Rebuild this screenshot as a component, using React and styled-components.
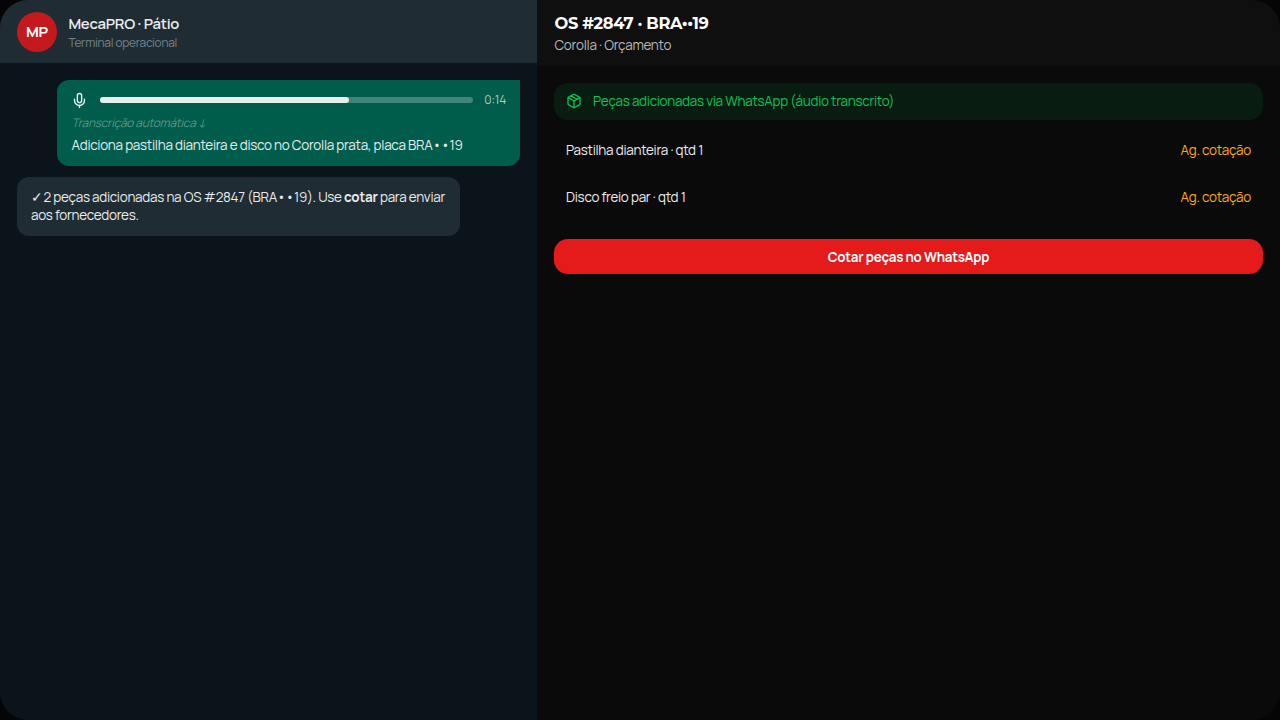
import React from "react";
import styled, { createGlobalStyle } from "styled-components";
import { Mic, Package } from "lucide-react";

const GlobalStyle = createGlobalStyle`
  * { box-sizing: border-box; }
  body {
    margin: 0;
    background: #050505;
    font-family: Manrope, sans-serif;
  }
`;

const Frame = styled.main`
  display: flex;
  width: 1280px;
  height: 720px;
  border-radius: 28px;
  overflow: hidden;
  background: #0a0a0a;
`;

const Chat = styled.section`
  flex: 0 0 537px;
  background: #0b141a;
`;

const ChatHeader = styled.header`
  display: flex;
  align-items: center;
  gap: 11.5px;
  height: 63px;
  padding: 0 17px;
  background: #202c33;
`;

const Avatar = styled.div`
  display: grid;
  place-items: center;
  width: 40px;
  height: 40px;
  border-radius: 50%;
  background: #c41a1e;
`;

const Label = styled.span`
  display: block;
  white-space: nowrap;
  font-size: ${(p) => p.$size || 13.44}px;
  line-height: ${(p) => p.$line || 18}px;
  font-weight: ${(p) => p.$weight || 400};
  letter-spacing: -0.02em;
  color: ${(p) => p.$color || "#e9edef"};
`;

const Contact = styled.div`
  padding-top: 2px;
`;

const Messages = styled.div`
  display: flex;
  flex-direction: column;
  gap: 12px;
  padding: 17px;
`;

const VoiceBubble = styled.article`
  align-self: flex-end;
  width: 463px;
  height: 85.5px;
  padding: 11px 14px 0 14.5px;
  border-radius: 12px 0 12px 12px;
  background: #005c4b;
`;

const Player = styled.div`
  display: flex;
  align-items: center;
  height: 18px;
  color: #e2f1ee;

  svg {
    margin-left: -0.5px;
  }
`;

const Track = styled.div`
  flex: 1;
  height: 6px;
  margin: 0 11.5px 0 12px;
  border-radius: 3px;
  background: #408577;
`;

const Progress = styled.div`
  width: 66.7%;
  height: 6px;
  border-radius: 3px;
  background: #e6f0ee;
`;

const Transcript = styled(Label)`
  margin-top: 5px;
  font-style: italic;
`;

const PlateMask = styled.span`
  word-spacing: -2.4px;
`;

const Check = styled.span`
  display: inline-block;
  width: 9px;
  margin-right: 3.5px;
  font-size: 14px;
  line-height: 1;
`;

const ReplyBubble = styled.article`
  width: 443px;
  height: 59px;
  margin-top: -0.5px;
  padding: 10.5px 14px;
  border-radius: 12px;
  background: #202c33;
`;

const Order = styled.section`
  flex: 1;
  background: #0a0a0a;
`;

const OrderHeader = styled.header`
  height: 66px;
  padding: 13px 17px 0 17.5px;
  background: #0f0f0f;
`;

const OrderTitle = styled(Label)`
  font-family: Montserrat, sans-serif;
`;

const OrderBody = styled.div`
  padding: 17px 17px 0;
`;

const Notice = styled.div`
  display: flex;
  align-items: center;
  gap: 11.5px;
  height: 37px;
  padding: 0 12px 1px 11.5px;
  border-radius: 14px;
  background: #091c12;
  color: #00c853;
`;

const Part = styled.div`
  display: flex;
  align-items: center;
  justify-content: space-between;
  height: 35px;
  margin-top: 12px;
  padding: 0 12px;
`;

const QuoteButton = styled.button`
  display: flex;
  align-items: center;
  justify-content: center;
  width: 100%;
  height: 35.5px;
  margin-top: 24.5px;
  padding: 1px 0 0;
  border: 0;
  border-radius: 14px;
  background: #e51a1a;
  font-family: inherit;
`;

const parts = ["Pastilha dianteira · qtd 1", "Disco freio par · qtd 1"];

export default function App() {
  return (
    <>
      <GlobalStyle />
      <Frame>
        <Chat>
          <ChatHeader>
            <Avatar><Label $size={15} $weight={700} $color="#fff">MP</Label></Avatar>
            <Contact>
              <Label $size={14.9} $line={20.5} $weight={600}>MecaPRO · Pátio</Label>
              <Label $size={11.9} $line={19} $color="#75838c">Terminal operacional</Label>
            </Contact>
          </ChatHeader>
          <Messages>
            <VoiceBubble>
              <Player>
                <Mic size={17} strokeWidth={2} />
                <Track><Progress /></Track>
                <Label $size={12} $color="#a9cdc4">0:14</Label>
              </Player>
              <Transcript $size={11.9} $color="#5d9689">Transcrição automática ↓</Transcript>
              <Label $line={26}>Adiciona pastilha dianteira e disco no Corolla prata, placa BRA<PlateMask>• •</PlateMask>19</Label>
            </VoiceBubble>
            <ReplyBubble>
              <Label $line={18.5}><Check>✓</Check>2 peças adicionadas na OS #2847 (BRA<PlateMask>• •</PlateMask>19). Use <b>cotar</b> para enviar</Label>
              <Label $line={18.5}>aos fornecedores.</Label>
            </ReplyBubble>
          </Messages>
        </Chat>
        <Order>
          <OrderHeader>
            <OrderTitle $size={16.25} $line={21} $weight={700} $color="#fff">OS #2847 · BRA••19</OrderTitle>
            <Label $line={23} $color="#b8b8b8">Corolla · Orçamento</Label>
          </OrderHeader>
          <OrderBody>
            <Notice>
              <Package size={16} strokeWidth={2} />
              <Label $color="#00c853">Peças adicionadas via WhatsApp (áudio transcrito)</Label>
            </Notice>
            {parts.map((name) => (
              <Part key={name}>
                <Label $color="#ededed">{name}</Label>
                <Label $color="#ffab00">Ag. cotação</Label>
              </Part>
            ))}
            <QuoteButton><Label $size={13.35} $weight={700} $color="#fff">Cotar peças no WhatsApp</Label></QuoteButton>
          </OrderBody>
        </Order>
      </Frame>
    </>
  );
}
